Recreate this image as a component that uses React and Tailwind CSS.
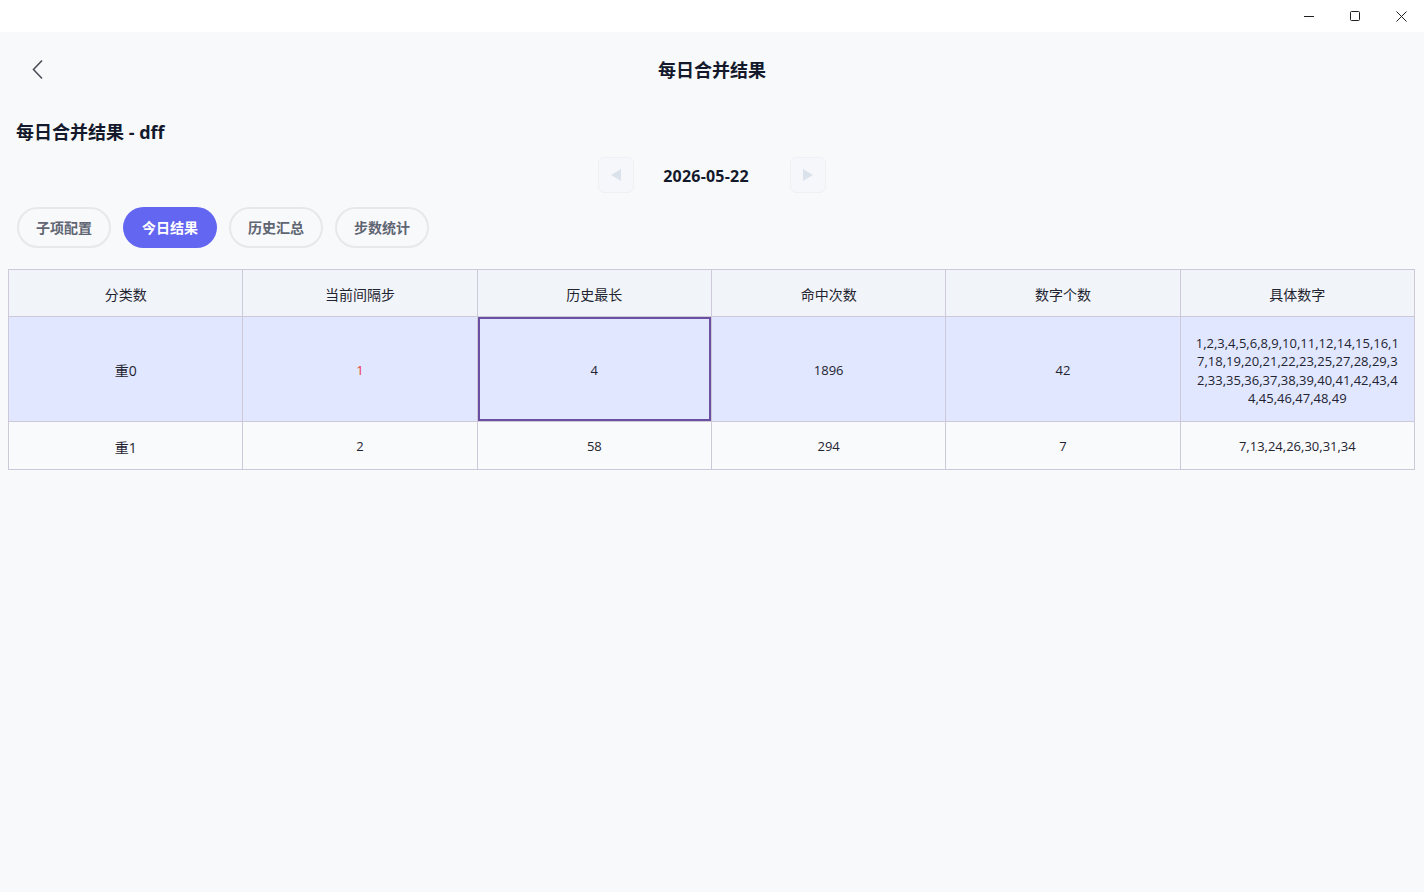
import React from "react";

const font = { fontFamily: '"Open Sans","Noto Sans CJK SC",sans-serif' };

const cols = ["分类数", "当前间隔步", "历史最长", "命中次数", "数字个数", "具体数字"];

const tabs = ["子项配置", "今日结果", "历史汇总", "步数统计"];

function WindowControls() {
  return (
    <div className="flex h-8 items-center justify-end bg-white">
      <button className="flex h-8 w-[46px] items-center justify-center text-[#1f1f1f]">
        <svg width="10" height="10" viewBox="0 0 10 10">
          <path d="M0 5.5h10" stroke="currentColor" strokeWidth="1" />
        </svg>
      </button>
      <button className="flex h-8 w-[46px] items-center justify-center text-[#1f1f1f]">
        <svg width="10" height="10" viewBox="0 0 10 10">
          <rect x="0.5" y="0.5" width="9" height="9" rx="1" fill="none" stroke="currentColor" strokeWidth="1" />
        </svg>
      </button>
      <button className="flex h-8 w-[46px] items-center justify-center text-[#1f1f1f]">
        <svg width="11" height="11" viewBox="0 0 11 11">
          <path d="M0.5 0.5l10 10M10.5 0.5l-10 10" stroke="currentColor" strokeWidth="1" />
        </svg>
      </button>
    </div>
  );
}

const cell = "border border-[#cdc9d9] pt-[3px] text-center";

export default function App() {
  const lines = [
    "1,2,3,4,5,6,8,9,10,11,12,14,15,16,1",
    "7,18,19,20,21,22,23,25,27,28,29,3",
    "2,33,35,36,37,38,39,40,41,42,43,4",
    "4,45,46,47,48,49",
  ];
  return (
    <div className="flex h-[892px] w-[1424px] flex-col overflow-hidden bg-[#f8f9fb]" style={font}>
      <WindowControls />

      {/* page header */}
      <div className="relative flex h-[76px] items-center justify-center">
        <button className="absolute left-[26px] top-1/2 flex h-8 w-6 -translate-y-1/2 items-center justify-center text-[#4b4f58]">
          <svg width="12" height="22" viewBox="0 0 12 22">
            <path d="M10 1.5L1.5 10.5L10 19.5" fill="none" stroke="currentColor" strokeWidth="1.6" strokeLinejoin="miter" />
          </svg>
        </button>
        <h1 className="text-[18px] font-bold text-[#141a2b]">每日合并结果</h1>
      </div>

      <div className="flex flex-col">
        <h2 className="ml-4 mt-[12px] text-[18px] font-bold leading-6 text-[#141a2b]">每日合并结果 - dff</h2>

        {/* date switcher */}
        <div className="mt-[13px] flex items-center justify-center">
          <button className="flex h-9 w-9 items-center justify-center rounded-md border border-[#eff1f5] bg-[#f6f7fa]">
            <svg width="12" height="14" viewBox="0 0 12 14">
              <path d="M11 1L1 7l10 6z" fill="#dce2eb" />
            </svg>
          </button>
          <span className="w-[156px] pr-3 pt-[2px] text-center text-[16px] font-bold tracking-[0.2px] text-[#141a2b]">2026-05-22</span>
          <button className="flex h-9 w-9 items-center justify-center rounded-md border border-[#eff1f5] bg-[#f6f7fa]">
            <svg width="12" height="14" viewBox="0 0 12 14">
              <path d="M1 1l10 6-10 6z" fill="#dce2eb" />
            </svg>
          </button>
        </div>

        {/* tabs */}
        <div className="ml-[17px] mt-[14px] flex gap-3">
          {tabs.map((t, i) =>
            i === 1 ? (
              <button key={t} className="h-[41px] w-[94px] rounded-full bg-[#6366f1] text-[14px] font-bold text-white">
                {t}
              </button>
            ) : (
              <button key={t} className="h-[41px] w-[94px] rounded-full border-2 border-[#e6e8ec] bg-[#f8f9fb] text-[14px] font-bold text-[#5f6572]">
                {t}
              </button>
            )
          )}
        </div>

        {/* result table */}
        <div className="ml-2 mr-[9px] mt-[21px]">
          <table className="w-full table-fixed border-collapse text-[13px] text-[#1f2430]">
            <thead>
              <tr className="h-[47px] bg-[#f1f4f9]">
                {cols.map((c) => (
                  <th key={c} className={`${cell} text-[14px] font-normal`}>
                    {c}
                  </th>
                ))}
              </tr>
            </thead>
            <tbody>
              <tr className="h-[105px] bg-[#e0e7ff]">
                <td className={`${cell} text-[14px]`}>重0</td>
                <td className={`${cell} text-[#ef3b3b]`}>1</td>
                <td className={`${cell} shadow-[inset_0_0_0_2px_#6b4fa2]`}>4</td>
                <td className={cell}>1896</td>
                <td className={cell}>42</td>
                <td className={`${cell} px-3 leading-[18.5px]`}>
                  {lines.map((l) => (
                    <span key={l} className="block">{l}</span>
                  ))}
                </td>
              </tr>
              <tr className="h-[48px] bg-[#f9fafc]">
                <td className={`${cell} text-[14px]`}>重1</td>
                <td className={cell}>2</td>
                <td className={cell}>58</td>
                <td className={cell}>294</td>
                <td className={cell}>7</td>
                <td className={cell}>7,13,24,26,30,31,34</td>
              </tr>
            </tbody>
          </table>
        </div>
      </div>
    </div>
  );
}
